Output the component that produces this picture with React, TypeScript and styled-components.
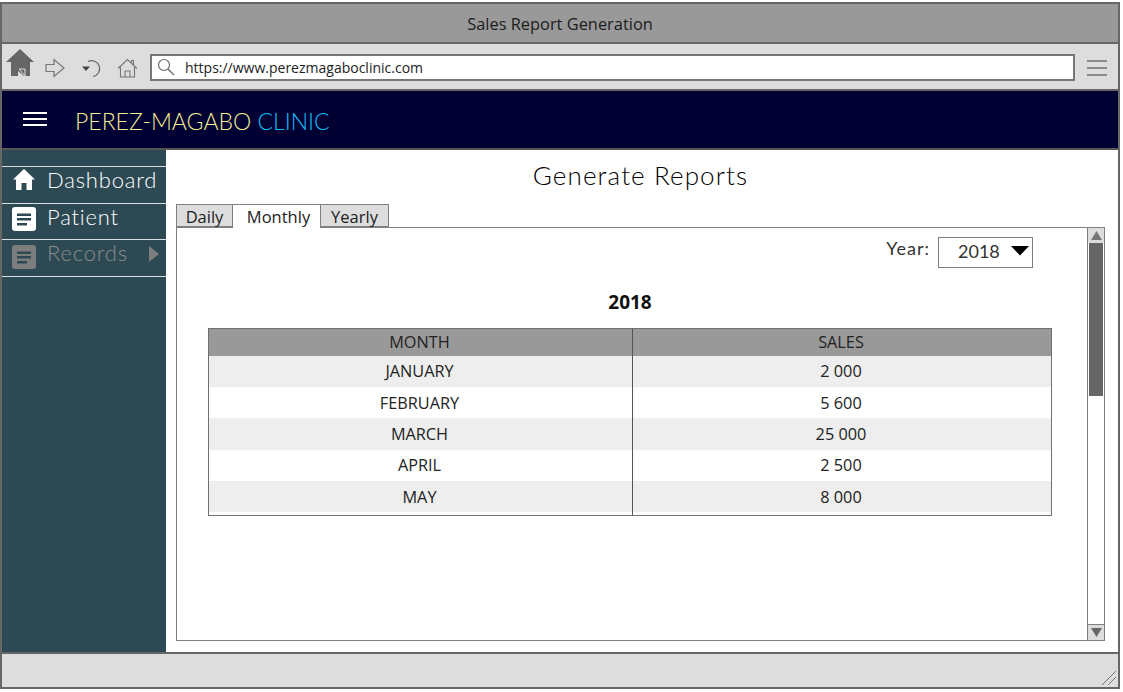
import React from "react";
import styled, { createGlobalStyle } from "styled-components";

const Global = createGlobalStyle`
  html, body { margin: 0; padding: 0; background: #fff; }
  #root { height: 692px; width: 1123px; overflow: hidden; }
  * { box-sizing: border-box; }
`;

const Page = styled.div`
  width: 1123px;
  height: 692px;
  padding: 2px 3px 3px 0;
  background: #fff;
  font-family: "Open Sans", "Noto Sans", sans-serif;
  color: #222;
`;

const Frame = styled.div`
  width: 1120px;
  height: 687px;
  border: 2px solid #666;
  display: flex;
  flex-direction: column;
`;

const TitleBar = styled.div`
  height: 40px;
  flex: none;
  background: #999;
  border-bottom: 2px solid #666;
  display: flex;
  align-items: center;
  justify-content: center;
  font-size: 16.4px;
  color: #1c1c1c;
`;

const Toolbar = styled.div`
  height: 47px;
  flex: none;
  background: #ddd;
  border-bottom: 2px solid #666;
  display: flex;
  align-items: center;
  padding: 2px 11px 0 3px;
`;

const NavIcons = styled.div`
  display: flex;
  align-items: center;
  width: 145px;
  flex: none;
`;

const UrlBar = styled.div`
  flex: 1;
  height: 27px;
  background: #fff;
  border: 2px solid #777;
  display: flex;
  align-items: center;
  gap: 10px;
  padding: 0 0 1px 5px;
  font-size: 14px;
  color: #222;
`;

const MenuLines = styled.div`
  width: 20px;
  margin: 1px 0 0 12px;
  display: flex;
  flex-direction: column;
  gap: 5px;
  & > span { height: 2px; background: #8a8a8a; display: block; }
`;

const Brand = styled.div`
  height: 59px;
  flex: none;
  background: #000033;
  border-bottom: 2px solid #555;
  display: flex;
  align-items: center;
  padding: 0 0 2px 21px;
`;

const Burger = styled.div`
  width: 24px;
  display: flex;
  flex-direction: column;
  gap: 4px;
  margin-right: 28px;
  & > span { height: 2px; background: #fff; display: block; }
`;

const BrandText = styled.div`
  font-family: Lato, sans-serif;
  font-weight: 300;
  font-size: 23px;
  color: #f2ed92;
  position: relative;
  top: 2px;
  & > span { color: #10bdf5; }
`;

const Body = styled.div`
  flex: 1;
  min-height: 0;
  display: flex;
`;

const Sidebar = styled.nav`
  width: 164px;
  flex: none;
  background: #2d4a54;
  padding-top: 16px;
`;

const NavItem = styled.div<{ $muted?: boolean }>`
  height: 36.5px;
  border-top: 1.5px solid #d8e0e2;
  display: flex;
  align-items: flex-start;
  padding: 0 0 0 10px;
  color: ${(p) => (p.$muted ? "#8a8a8a" : "#fff")};
  font-family: Lato, sans-serif;
  font-weight: 300;
  font-size: 22px;
  line-height: 25px;
  letter-spacing: 0.8px;
  &:last-child { border-bottom: 1.5px solid #d8e0e2; height: 38px; }
`;

const NavIconBox = styled.span<{ $top: number }>`
  width: 24px;
  height: 24px;
  margin: ${(p) => p.$top}px 11px 0 0;
  flex: none;
  display: block;
`;

const Caret = styled.svg`
  margin: 6px 0 0 21px;
`;

const Main = styled.main`
  flex: 1;
  min-width: 0;
  background: #fff;
  display: flex;
  flex-direction: column;
  padding: 0 13px 11px 10px;
`;

const PageTitle = styled.h1`
  margin: 0;
  height: 54px;
  flex: none;
  text-align: center;
  font-family: Lato, sans-serif;
  font-weight: 300;
  font-size: 26px;
  line-height: 50px;
  letter-spacing: 1.1px;
  color: #000;
`;

const Tabs = styled.div`
  display: flex;
  height: 23px;
  flex: none;
  position: relative;
  z-index: 1;
`;

const Tab = styled.div<{ $active?: boolean; $w: number }>`
  width: ${(p) => p.$w}px;
  height: ${(p) => (p.$active ? 24 : 23)}px;
  padding-left: ${(p) => (p.$active ? 4 : 0)}px;
  text-align: center;
  border: 1px solid #808080;
  border-width: ${(p) => (p.$active ? "1px 0 0 0" : "1px")};
  background: ${(p) => (p.$active ? "#fff" : "#ddd")};
  font-size: 16.5px;
  line-height: 23px;
  color: #222;
`;

const Panel = styled.div`
  flex: 1;
  min-height: 0;
  border: 1px solid #808080;
  display: flex;
`;

const PanelBody = styled.div`
  flex: 1;
  min-width: 0;
  display: flex;
  flex-direction: column;
  padding: 9px 35px 0 31px;
`;

const YearRow = styled.div`
  display: flex;
  justify-content: flex-end;
  align-items: flex-start;
  gap: 8px;
  height: 31px;
  flex: none;
  padding-right: 19px;
`;

const YearLabel = styled.span`
  font-family: Lato, sans-serif;
  font-size: 18px;
  line-height: 22px;
  letter-spacing: 1px;
  color: #333;
`;

const YearSelect = styled.div`
  width: 95px;
  height: 31px;
  border: 1px solid #808080;
  display: flex;
  align-items: center;
  padding: 0 0 3px 19px;
  font-family: Lato, sans-serif;
  font-size: 18px;
  color: #333;
  gap: 10px;
`;

const YearHeading = styled.h2`
  margin: 0;
  height: 60px;
  flex: none;
  text-align: center;
  font-size: 19px;
  font-weight: 700;
  line-height: 69px;
  color: #111;
`;

const TableBox = styled.div`
  height: 188px;
  flex: none;
  border: 1px solid #707070;
  display: flex;
  flex-direction: column;
`;

const Row = styled.div<{ $kind: "head" | "odd" | "even" }>`
  height: ${(p) => (p.$kind === "head" ? 26.5 : 31.4)}px;
  flex: none;
  display: grid;
  grid-template-columns: 423px 1fr;
  background: ${(p) => (p.$kind === "head" ? "#999" : p.$kind === "odd" ? "#eee" : "#fff")};
`;

const Cell = styled.div`
  display: flex;
  align-items: center;
  justify-content: center;
  font-size: 16.3px;
  color: #222;
  padding-right: 2px;
  & + & { border-left: 1px solid #555; }
`;

const TableFill = styled.div`
  flex: 1;
  display: grid;
  grid-template-columns: 423px 1fr;
  & > span + span { border-left: 1px solid #555; }
`;

const Scrollbar = styled.div`
  width: 17px;
  flex: none;
  border-left: 1px solid #808080;
  display: flex;
  flex-direction: column;
`;

const ScrollButton = styled.div<{ $end?: boolean }>`
  height: ${(p) => (p.$end ? 16 : 15)}px;
  flex: none;
  background: #ddd;
  display: flex;
  align-items: center;
  justify-content: center;
  ${(p) => (p.$end ? "border-top: 1px solid #808080;" : "")}
`;

const ScrollTrack = styled.div`
  flex: 1;
  padding: 0 1px;
`;

const ScrollThumb = styled.div`
  height: 153px;
  background: #666;
`;

const Footer = styled.div`
  height: 35px;
  flex: none;
  background: #ddd;
  border-top: 2px solid #666;
  display: flex;
  justify-content: flex-end;
  align-items: flex-end;
  padding: 0 0 1px 0;
`;

const HomeSolid = () => (
  <svg width="30" height="30" viewBox="0 0 30 30" style={{ display: "block", marginTop: -9 }}>
    <path d="M15 1 L29 14 L25 14 L25 28 L19 28 L13 23 L13 28 L6 28 L6 14 L1 14 Z" fill="#666" />
    <path d="M14 21 L20 21 L20 28 Z" fill="#666" stroke="#ddd" strokeWidth="1" />
  </svg>
);

const ForwardOutline = () => (
  <svg width="20" height="20" viewBox="0 0 20 20" style={{ display: "block", margin: "0 16px 0 10px" }}>
    <path d="M1 6.5 H9 V1.5 L19 10 L9 18.5 V13.5 H1 Z" fill="none" stroke="#777" strokeWidth="1.2" />
  </svg>
);

const UndoArrow = () => (
  <svg width="24" height="20" viewBox="0 0 24 20" style={{ display: "block", marginRight: 12 }}>
    <path d="M7 3.5 A8 8 0 1 1 12 18.5" fill="none" stroke="#666" strokeWidth="1.2" />
    <path d="M1 8.5 L9 8.5 L5 13 Z" fill="#444" />
  </svg>
);

const HomeOutline = () => (
  <svg width="21" height="20" viewBox="0 0 21 20" style={{ display: "block" }}>
    <path d="M1 10.5 L10.5 1.5 L20 10.5 M3.5 9 V19 H17.5 V9 M8 19 V13 H13 V19 M14.5 5 V2.5 H16.5 V7" fill="none" stroke="#777" strokeWidth="1.1" />
  </svg>
);

const Magnifier = () => (
  <svg width="18" height="18" viewBox="0 0 18 18" style={{ flex: "none", display: "block" }}>
    <circle cx="7" cy="7" r="5.5" fill="none" stroke="#666" strokeWidth="1.2" />
    <path d="M11 11 L17 17" stroke="#666" strokeWidth="1.3" />
  </svg>
);

const HomeWhite = () => (
  <svg width="24" height="24" viewBox="0 0 24 24" style={{ display: "block" }}>
    <path d="M12 1 L23 11.5 L20 11.5 L20 22 L14.5 22 L14.5 15 L9.5 15 L9.5 22 L4 22 L4 11.5 L1 11.5 Z" fill="#fff" />
  </svg>
);

const DocIcon = ({ color }: { color: string }) => (
  <svg width="24" height="24" viewBox="0 0 24 24" style={{ display: "block" }}>
    <rect x="0" y="0" width="24" height="24" rx="3" fill={color} />
    <path d="M5 6.5 H19 V9 H5 Z M5 11 H19 V13.5 H5 Z M5 16 H15 V18.5 H5 Z" fill="#2d4a54" />
  </svg>
);

const months = [
  ["JANUARY", "2 000"],
  ["FEBRUARY", "5 600"],
  ["MARCH", "25 000"],
  ["APRIL", "2 500"],
  ["MAY", "8 000"],
];

export default function App() {
  return (
    <Page>
      <Global />
      <Frame>
        <TitleBar>Sales Report Generation</TitleBar>
        <Toolbar>
          <NavIcons>
            <HomeSolid />
            <ForwardOutline />
            <UndoArrow />
            <HomeOutline />
          </NavIcons>
          <UrlBar>
            <Magnifier />
            https://www.perezmagaboclinic.com
          </UrlBar>
          <MenuLines>
            <span />
            <span />
            <span />
          </MenuLines>
        </Toolbar>
        <Brand>
          <Burger>
            <span />
            <span />
            <span />
          </Burger>
          <BrandText>
            PEREZ-MAGABO <span>CLINIC</span>
          </BrandText>
        </Brand>
        <Body>
          <Sidebar>
            <NavItem>
              <NavIconBox $top={1}>
                <HomeWhite />
              </NavIconBox>
              Dashboard
            </NavItem>
            <NavItem>
              <NavIconBox $top={3}>
                <DocIcon color="#fff" />
              </NavIconBox>
              Patient
            </NavItem>
            <NavItem $muted>
              <NavIconBox $top={5}>
                <DocIcon color="#7d7d7d" />
              </NavIconBox>
              Records
              <Caret width="10" height="16" viewBox="0 0 10 16">
                <path d="M0 0 L10 8 L0 16 Z" fill="#7d7d7d" />
              </Caret>
            </NavItem>
          </Sidebar>
          <Main>
            <PageTitle>Generate Reports</PageTitle>
            <Tabs>
              <Tab $w={57}>Daily</Tab>
              <Tab $w={87} $active>Monthly</Tab>
              <Tab $w={69}>Yearly</Tab>
            </Tabs>
            <Panel>
              <PanelBody>
                <YearRow>
                  <YearLabel>Year:</YearLabel>
                  <YearSelect>
                    2018
                    <svg width="20" height="10" viewBox="0 0 20 10">
                      <path d="M1 0 H19 L10 9.5 Z" fill="#000" />
                    </svg>
                  </YearSelect>
                </YearRow>
                <YearHeading>2018</YearHeading>
                <TableBox>
                  <Row $kind="head">
                    <Cell>MONTH</Cell>
                    <Cell>SALES</Cell>
                  </Row>
                  {months.map(([m, s], i) => (
                    <Row key={m} $kind={i % 2 === 0 ? "odd" : "even"}>
                      <Cell>{m}</Cell>
                      <Cell>{s}</Cell>
                    </Row>
                  ))}
                  <TableFill>
                    <span />
                    <span />
                  </TableFill>
                </TableBox>
              </PanelBody>
              <Scrollbar>
                <ScrollButton>
                  <svg width="11" height="9" viewBox="0 0 11 9">
                    <path d="M5.5 0 L11 9 H0 Z" fill="#777" />
                  </svg>
                </ScrollButton>
                <ScrollTrack>
                  <ScrollThumb />
                </ScrollTrack>
                <ScrollButton $end>
                  <svg width="11" height="9" viewBox="0 0 11 9">
                    <path d="M0 0 H11 L5.5 9 Z" fill="#666" />
                  </svg>
                </ScrollButton>
              </Scrollbar>
            </Panel>
          </Main>
        </Body>
        <Footer>
          <svg width="18" height="18" viewBox="0 0 18 18" style={{ display: "block" }}>
            <path d="M2 17 L16 3 M8 17 L16 9" stroke="#777" strokeWidth="1" fill="none" />
          </svg>
        </Footer>
      </Frame>
    </Page>
  );
}
